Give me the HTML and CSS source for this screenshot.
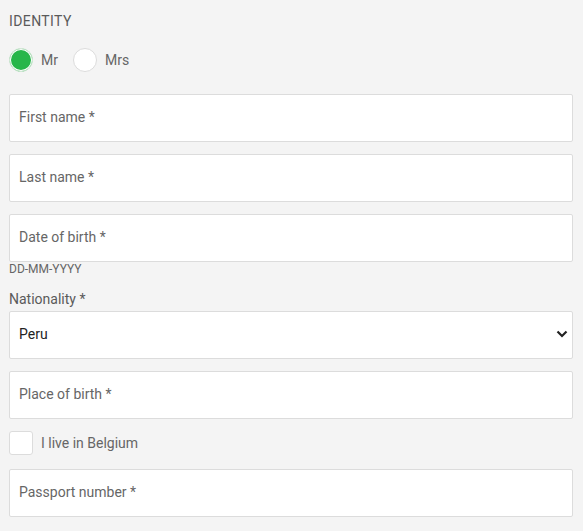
FILE: index.html
```html
<!DOCTYPE html>
<html>
<head>
<meta charset="utf-8">
<link rel="stylesheet" href="styles.css">
</head>
<body>
<form class="form">
  <div class="title">IDENTITY</div>
  <div class="radios">
    <label class="radio"><span class="dot dot-on"></span><span>Mr</span></label>
    <label class="radio"><span class="dot"></span><span>Mrs</span></label>
  </div>
  <div class="field first"><span class="ph">First name *</span></div>
  <div class="field"><span class="ph">Last name *</span></div>
  <div class="field"><span class="ph">Date of birth *</span></div>
  <div class="hint">DD-MM-YYYY</div>
  <div class="label">Nationality *</div>
  <div class="field select">
    <span class="val">Peru</span>
    <svg class="chev" width="12" height="8" viewBox="0 0 12 8"><path d="M1.5 1.5 L6 6 L10.5 1.5" fill="none" stroke="#222" stroke-width="2.2"/></svg>
  </div>
  <div class="field"><span class="ph">Place of birth *</span></div>
  <label class="check"><span class="box"></span><span>I live in Belgium</span></label>
  <div class="field passport"><span class="ph">Passport number *</span></div>
</form>
</body>
</html>
```
FILE: styles.css
```css
html, body { margin: 0; padding: 0; background: #f4f4f4; }
body { font-family: Roboto, "Liberation Sans", sans-serif; color: #5f6368; }
.form { padding: 12px 10px 0 9px; display: flex; flex-direction: column; }
.title { font-size: 14px; line-height: 18px; color: #5a5a5a; letter-spacing: 0.4px; }
.radios { display: flex; margin-top: 18px; height: 24px; align-items: center; }
.radio { display: flex; align-items: center; font-size: 14px; color: #666; margin-right: 15px; }
.dot { width: 22px; height: 22px; border-radius: 50%; background: #fff; border: 1px solid #dcdcdc; margin-right: 8px; box-sizing: content-box; }
.dot-on { background: #27b64a; box-shadow: inset 0 0 0 1px #fff; border-color: #d8e8da; }
.field { height: 48px; box-sizing: border-box; background: #fff; border: 1px solid #dcdcdc; border-radius: 2px; display: flex; align-items: center; padding: 0 9px 2px; font-size: 14px; margin-top: 12px; }
.field.first { margin-top: 22px; }
.ph { color: #666; }
.hint { font-size: 12px; line-height: 14px; color: #666; margin-top: 0; }
.label { font-size: 14px; line-height: 18px; color: #5a5a5a; margin-top: 14px; }
.select { margin-top: 3px; justify-content: space-between; padding-right: 4px; }
.val { color: #222; }
.chev { display: block; }
.check { display: flex; align-items: center; margin-top: 12px; font-size: 14px; color: #666; height: 24px; }
.box { width: 22px; height: 22px; background: #fff; border: 1px solid #dcdcdc; border-radius: 3px; margin-right: 8px; }
.passport { margin-top: 14px; }
```
